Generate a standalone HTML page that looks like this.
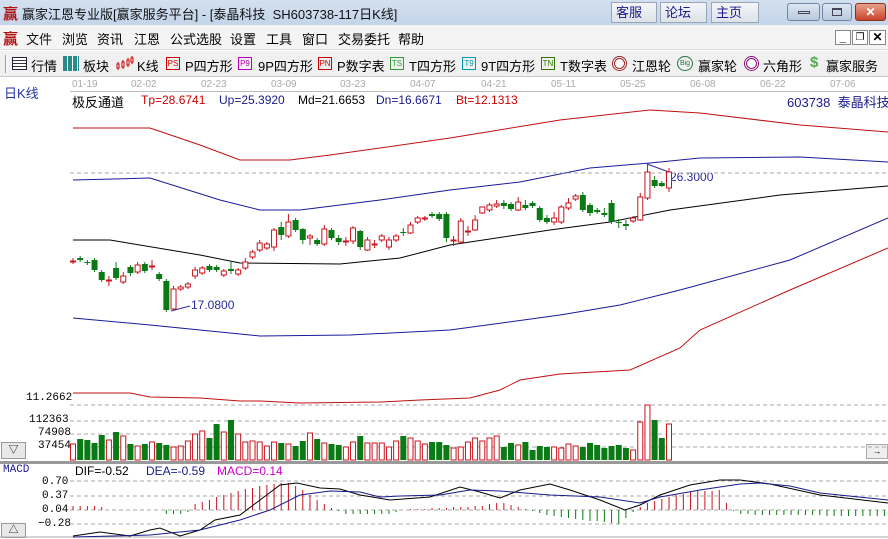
<!DOCTYPE html>
<html><head><meta charset="utf-8">
<style>
*{margin:0;padding:0;box-sizing:border-box}
body{width:888px;height:539px;overflow:hidden;background:#fff;font-family:"Liberation Sans","Noto Sans CJK SC",sans-serif;font-size:12px;position:relative}
.a{position:absolute;white-space:nowrap}
#title{left:0;top:0;width:888px;height:25px;background:linear-gradient(#d3e0ef,#c4d5ea)}
#menu{left:0;top:25px;width:888px;height:25px;background:#f4f4f4;border-bottom:1px solid #dcdcdc}
#tool{left:0;top:51px;width:888px;height:26px;background:#f0f0f0;border-bottom:1px solid #c8c8c8}
.wb{top:2px;height:21px;background:linear-gradient(#f4f6f9,#dde3ea);border:1px solid #9aa6b4;color:#1a1a8c;font-size:13px;padding-left:4px;line-height:19px}
.ctl{top:3px;height:18px;border:1px solid #6f83a3;border-radius:3px;background:linear-gradient(#dde6f1,#b9c9de)}
.ib{width:14px;height:13px;font-size:8px;line-height:11px;text-align:center;border:1px solid;font-family:"Liberation Sans",sans-serif}
</style></head><body>
<div id="title" class="a"></div>
<div class="a" style="left:3px;top:3px;color:#b01010;font-size:15px;font-weight:bold">赢</div>
<div class="a" style="left:22px;top:4px;font-size:13px;color:#111">赢家江恩专业版[赢家服务平台] - [泰晶科技&nbsp; SH603738-117日K线]</div>
<div class="a wb" style="left:611px;width:46px">客服</div>
<div class="a wb" style="left:660px;width:47px">论坛</div>
<div class="a wb" style="left:711px;width:48px">主页</div>
<div class="a ctl" style="left:787px;width:33px"><div style="margin:7px auto 0;width:12px;height:3px;border:1px solid #445"></div></div>
<div class="a ctl" style="left:822px;width:30px"><div style="margin:4px auto 0;width:10px;height:8px;border:1px solid #445;border-top-width:2px"></div></div>
<div class="a ctl" style="left:855px;width:31px;background:linear-gradient(#e8a08a,#c8462c);border-color:#8a3020;color:#fff;text-align:center;font-weight:bold;line-height:16px">✕</div>

<div id="menu" class="a"></div>
<div class="a" style="left:3px;top:28px;color:#b01010;font-size:15px;font-weight:bold">赢</div>
<div class="a" style="left:26px;top:29px;font-size:13px;color:#111">文件</div>
<div class="a" style="left:62px;top:29px;font-size:13px">浏览</div>
<div class="a" style="left:97px;top:29px;font-size:13px">资讯</div>
<div class="a" style="left:134px;top:29px;font-size:13px">江恩</div>
<div class="a" style="left:170px;top:29px;font-size:13px">公式选股</div>
<div class="a" style="left:230px;top:29px;font-size:13px">设置</div>
<div class="a" style="left:266px;top:29px;font-size:13px">工具</div>
<div class="a" style="left:302px;top:29px;font-size:13px">窗口</div>
<div class="a" style="left:338px;top:29px;font-size:13px">交易委托</div>
<div class="a" style="left:398px;top:29px;font-size:13px">帮助</div>
<div class="a" style="left:835px;top:30px;width:16px;height:15px;border:1px solid #888;background:#fff;font-weight:bold;text-align:center;line-height:12px">_</div>
<div class="a" style="left:852px;top:30px;width:16px;height:15px;border:1px solid #888;background:#fff;font-size:10px;text-align:center;line-height:13px">❐</div>
<div class="a" style="left:869px;top:30px;width:17px;height:15px;border:1px solid #888;background:#fff;font-weight:bold;text-align:center;line-height:13px">✕</div>

<div id="tool" class="a"></div>
<div class="a" style="left:5px;top:55px;width:2px;height:18px;border-left:1px solid #999;border-right:1px solid #fff"></div>
<div class="a" style="left:12px;top:57px;width:15px;height:13px;border:1px solid #223;background:repeating-linear-gradient(#fff 0 2px,#334 2px 3px)"></div>
<div class="a" style="left:31px;top:56px;font-size:13px">行情</div>
<div class="a" style="left:63px;top:56px;width:16px;height:15px;background:repeating-linear-gradient(90deg,#2a8a8a 0 4px,#fff 4px 5px),#2a8a8a"></div>
<div class="a" style="left:83px;top:56px;font-size:13px">板块</div>
<svg class="a" style="left:116px;top:56px" width="18" height="16"><g stroke="#c00" fill="#fff"><line x1="2" y1="6" x2="2" y2="14"/><rect x="1" y="8" width="2" height="4"/><line x1="7" y1="4" x2="7" y2="13"/><rect x="6" y="6" width="2" height="5"/><line x1="12" y1="2" x2="12" y2="11"/><rect x="11" y="4" width="2" height="5"/><line x1="16" y1="0" x2="16" y2="8"/><rect x="15" y="2" width="2" height="4"/></g></svg>
<div class="a" style="left:137px;top:56px;font-size:13px">K线</div>
<div class="a ib" style="left:166px;top:57px;color:#c00;border-color:#c00">PS</div>
<div class="a" style="left:185px;top:56px;font-size:13px">P四方形</div>
<div class="a ib" style="left:238px;top:57px;color:#b0b;border-color:#b0b">P9</div>
<div class="a" style="left:258px;top:56px;font-size:13px">9P四方形</div>
<div class="a ib" style="left:318px;top:57px;color:#c00;border-color:#c00">PN</div>
<div class="a" style="left:337px;top:56px;font-size:13px">P数字表</div>
<div class="a ib" style="left:390px;top:57px;color:#393;border-color:#393">TS</div>
<div class="a" style="left:409px;top:56px;font-size:13px">T四方形</div>
<div class="a ib" style="left:462px;top:57px;color:#09a;border-color:#09a">T9</div>
<div class="a" style="left:481px;top:56px;font-size:13px">9T四方形</div>
<div class="a ib" style="left:541px;top:57px;color:#370;border-color:#370">TN</div>
<div class="a" style="left:560px;top:56px;font-size:13px">T数字表</div>
<div class="a" style="left:612px;top:56px;width:15px;height:15px;border-radius:50%;border:3px double #922;background:#fff"></div>
<div class="a" style="left:632px;top:56px;font-size:13px">江恩轮</div>
<div class="a" style="left:677px;top:56px;width:16px;height:15px;border-radius:50%;border:1px solid #274;font-size:7px;color:#274;text-align:center;line-height:13px">Big</div>
<div class="a" style="left:698px;top:56px;font-size:13px">赢家轮</div>
<div class="a" style="left:744px;top:56px;width:15px;height:15px;border-radius:50%;border:3px double #817;background:#fff"></div>
<div class="a" style="left:763px;top:56px;font-size:13px">六角形</div>
<div class="a" style="left:810px;top:54px;font-size:15px;color:#5a5;font-weight:bold">$</div>
<div class="a" style="left:826px;top:56px;font-size:13px">赢家服务</div>

<div class="a" style="left:4px;top:83px;color:#2233aa;font-size:13px">日K线</div>
<div class="a" style="left:70px;top:91px;width:818px;border-top:1px solid #bbb"></div>
<div class="a" style="left:72px;top:79px;color:#aaa;font-size:10px">01-19</div>
<div class="a" style="left:131px;top:79px;color:#aaa;font-size:10px">02-02</div>
<div class="a" style="left:201px;top:79px;color:#aaa;font-size:10px">02-23</div>
<div class="a" style="left:271px;top:79px;color:#aaa;font-size:10px">03-09</div>
<div class="a" style="left:340px;top:79px;color:#aaa;font-size:10px">03-23</div>
<div class="a" style="left:410px;top:79px;color:#aaa;font-size:10px">04-07</div>
<div class="a" style="left:481px;top:79px;color:#aaa;font-size:10px">04-21</div>
<div class="a" style="left:551px;top:79px;color:#aaa;font-size:10px">05-11</div>
<div class="a" style="left:620px;top:79px;color:#aaa;font-size:10px">05-25</div>
<div class="a" style="left:690px;top:79px;color:#aaa;font-size:10px">06-08</div>
<div class="a" style="left:760px;top:79px;color:#aaa;font-size:10px">06-22</div>
<div class="a" style="left:830px;top:79px;color:#aaa;font-size:10px">07-06</div>
<div class="a" style="left:72px;top:92px;font-size:13px">极反通道</div>
<div class="a" style="left:141px;top:93px;color:#c00">Tp=28.6741</div>
<div class="a" style="left:219px;top:93px;color:#1a1a8c">Up=25.3920</div>
<div class="a" style="left:298px;top:93px;color:#000">Md=21.6653</div>
<div class="a" style="left:376px;top:93px;color:#1a1a8c">Dn=16.6671</div>
<div class="a" style="left:456px;top:93px;color:#c00">Bt=12.1313</div>
<div class="a" style="left:787px;top:92px;color:#1a1a8c;font-size:13px">603738&nbsp; 泰晶科技</div>
<div class="a" style="left:191px;top:298px;color:#2a2aa0;font-size:12px">17.0800</div>
<div class="a" style="left:670px;top:170px;color:#2a2aa0;font-size:12px">26.3000</div>
<div class="a" style="left:26px;top:392px;font-size:11px;font-family:'Liberation Mono',monospace">11.2662</div>
<div class="a" style="left:29px;top:414px;font-size:11px;font-family:'Liberation Mono',monospace">112363</div>
<div class="a" style="left:38px;top:427px;font-size:11px;font-family:'Liberation Mono',monospace">74908</div>
<div class="a" style="left:38px;top:440px;font-size:11px;font-family:'Liberation Mono',monospace">37454</div>
<div class="a" style="left:1px;top:442px;width:25px;height:17px;border:1px solid #999;background:#e8e8e8;font-size:10px;text-align:center;line-height:15px">▽</div>
<div class="a" style="left:0;top:461px;width:888px;height:3px;background:#999"></div>
<div class="a" style="left:3px;top:464px;color:#1a1a8c;font-size:11px;font-family:'Liberation Mono',monospace">MACD</div>
<div class="a" style="left:75px;top:464px">DIF=-0.52</div>
<div class="a" style="left:146px;top:464px;color:#1a1a8c">DEA=-0.59</div>
<div class="a" style="left:217px;top:464px;color:#c0c">MACD=0.14</div>
<div class="a" style="left:42px;top:476px;font-size:11px;font-family:'Liberation Mono',monospace">0.70</div>
<div class="a" style="left:42px;top:490px;font-size:11px;font-family:'Liberation Mono',monospace">0.37</div>
<div class="a" style="left:42px;top:504px;font-size:11px;font-family:'Liberation Mono',monospace">0.04</div>
<div class="a" style="left:38px;top:518px;font-size:11px;font-family:'Liberation Mono',monospace">−0.28</div>
<div class="a" style="left:1px;top:523px;width:25px;height:15px;border:1px solid #999;background:#e8e8e8;font-size:10px;text-align:center;line-height:13px">△</div>
<div class="a" style="left:866px;top:444px;width:22px;height:15px;border:1px solid #aaa;background:#eee;font-size:9px;text-align:center;line-height:13px">→</div>

<svg class="a" style="left:0;top:0" width="888" height="539" id="sv">
<g fill="none" stroke-width="1">
<polyline stroke="#c01010" points="73,128 150,128 200,145 240,160 290,160 330,155 380,148 450,138 560,120 650,110 700,113 800,125 888,132"/>
<polyline stroke="#1a1a9c" points="73,180 150,178 220,200 260,210 300,210 380,200 450,190 520,182 590,168 650,163 700,158 800,157 888,162"/>
<polyline stroke="#000" points="73,240 110,240 200,255 240,263 340,264 400,258 450,245 550,230 610,222 670,210 780,195 888,186"/>
<polyline stroke="#1a1a9c" points="73,318 150,325 260,336 350,335 450,330 560,315 620,305 680,290 790,260 888,218"/>
<polyline stroke="#c01010" points="73,393 130,393 150,397 200,398 240,401 260,401 300,403 380,402 420,400 470,398 500,390 520,380 560,374 630,370 680,348 700,330 790,290 888,248"/>
<polyline stroke="#2a2aa0" points="171,311 190,306"/>
<polyline stroke="#2a2aa0" points="647,164 669,172"/>
<g stroke="#aaa" stroke-dasharray="4,3">
<line x1="70" y1="405" x2="888" y2="405"/><line x1="70" y1="421" x2="888" y2="421"/><line x1="70" y1="434" x2="888" y2="434"/><line x1="70" y1="447" x2="888" y2="447"/>
<line x1="70" y1="173" x2="888" y2="173"/>
<line x1="70" y1="481" x2="888" y2="481"/><line x1="70" y1="496" x2="888" y2="496"/><line x1="70" y1="510" x2="888" y2="510"/><line x1="70" y1="524" x2="888" y2="524"/>
</g>
<line x1="0" y1="537" x2="888" y2="537" stroke="#aaa"/>
<g id="cd"></g><g id="vol"></g><g id="mh"></g>
<polyline stroke="#000" points="73,536 100,532 130,536 150,530 160,528 180,536 200,530 215,520 240,515 260,500 280,485 297,483 320,488 340,489 360,495 390,500 430,497 460,487 480,492 500,498 520,490 550,484 570,490 600,500 625,510 640,505 660,495 690,485 720,480 740,480 770,484 820,495 888,503"/>
<polyline stroke="#1a1a8c" points="73,537 150,535 180,532 200,530 240,520 270,510 300,495 330,491 360,492 380,497 400,496 440,495 470,490 500,491 550,495 600,497 640,503 660,497 700,490 740,484 760,483 790,486 820,493 888,500"/>
</g>
</svg>
<script>
var C=[[261,261,258,264],[258,260],[262,263],[260,270],[272,280],[280,280,276,286],[268,278,262,280],[282,276,272,284],[267,273,265,276],[272,265,262,274],[264,271],[266,266,260,270],[274,279],[281,310,279,312],[309,289,286,311],[289,287],[287,284],[276,270,267,279],[273,268],[266,270],[267,270],[275,271],[269,271,262,274],[274,270],[268,262,258,270],[257,252],[250,243,240,252],[248,244,242,250],[247,230,228,251],[227,235,222,240],[236,222,214,238],[220,230,218,232],[229,240,228,244],[238,236,234,245],[240,244],[244,229,225,246],[230,238],[238,242,235,245],[241,241,237,246],[241,228,226,244],[231,247,230,250],[250,240,237,251],[244,244,240,248],[240,236],[247,240,237,250],[240,236],[232,233,228,236],[233,225,222,234],[222,218,216,224],[219,218],[214,216],[214,219],[214,238,212,242],[240,240,236,246],[242,221,218,244],[231,231,226,236],[230,220,215,231],[213,207,207,214],[210,205,203,212],[206,204,200,208],[203,206,200,209],[204,209],[210,202,197,211],[205,208,200,210],[203,206],[208,220],[218,222,215,224],[222,218,212,225],[222,207,205,224],[208,203,198,210],[199,196,194,201],[195,210,192,212],[205,213,203,216],[210,212],[213,215,208,217],[203,222,200,224],[222,223,219,228],[224,226,220,230],[221,218,216,223],[220,197,193,221],[198,172,164,200],[180,186,176,188],[183,186,181,187],[188,172,168,192]];
var V=[14,14,12,13,15,20,16,21,20,17,25,20,28,24,16,14,16,18,17,15,13,14,19,26,29,22,36,28,40,26,18,19,18,14,18,17,16,14,19,27,21,17,16,15,13,18,24,17,17,17,13,19,24,22,19,16,18,18,15,12,13,18,22,19,22,24,13,17,15,18,10,14,13,13,12,16,14,13,17,15,12,14,15,12,10,38,55,40,22,36];
var s='',v='',m='',N=C.length,sp=(669-73)/(N-1),off=V.length-N;
for(var i=0;i<N;i++){var c=C[i],x=73+i*sp,o=c[0],cl=c[1],h=c[2]!=null?c[2]:Math.min(o,cl)-2,l=c[3]!=null?c[3]:Math.max(o,cl)+2;var up=cl<=o;var col=up?'#c8141e':'#0a7a14';
s+='<line x1="'+x+'" y1="'+h+'" x2="'+x+'" y2="'+l+'" stroke="'+col+'"/>';
var t=Math.min(o,cl),bh=Math.max(Math.abs(o-cl),1);
s+= up?'<rect x="'+(x-2.5)+'" y="'+t+'" width="5" height="'+bh+'" fill="#fff" stroke="'+col+'"/>':'<rect x="'+(x-3)+'" y="'+t+'" width="6" height="'+bh+'" fill="'+col+'"/>';
var vh=V[i+off]||15;
v+= up?'<rect x="'+(x-2.5)+'" y="'+(460-vh)+'" width="5" height="'+vh+'" fill="#fff" stroke="#c8141e"/>':'<rect x="'+(x-3)+'" y="'+(460-vh)+'" width="6" height="'+vh+'" fill="#0a7a14"/>';}
function hv(x){var p=[[73,4],[100,4],[110,0],[160,0],[165,-4],[185,-4],[190,0],[195,6],[240,20],[285,28],[300,22],[320,8],[335,0],[345,-4],[390,-4],[400,0],[480,4],[500,8],[520,3],[530,0],[550,-6],[620,-14],[635,0],[650,8],[690,18],[720,20],[730,0],[740,-4],[760,-5],[888,-6]];for(var k=1;k<p.length;k++){if(x<=p[k][0]){var a=p[k-1],b=p[k];return a[1]+(b[1]-a[1])*(x-a[0])/(b[0]-a[0]);}}return -6}
for(var x=73;x<886;x+=sp){var h=Math.round(hv(x));if(h==0)continue;m+='<line x1="'+x+'" y1="510" x2="'+x+'" y2="'+(510-h)+'" stroke="'+(h>0?'#c8141e':'#0a7a14')+'"/>';}
document.getElementById('cd').innerHTML=s;document.getElementById('vol').innerHTML=v;document.getElementById('mh').innerHTML=m;
</script>
</body></html>
